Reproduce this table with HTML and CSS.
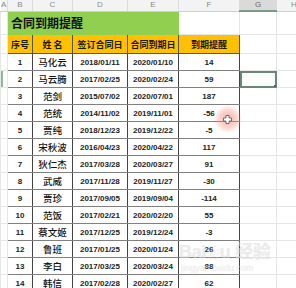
FILE: index.html
```html
<!DOCTYPE html>
<html>
<head>
<meta charset="utf-8">
<link rel="stylesheet" href="styles.css">
</head>
<body>
<div class="sheet">
<table class="grid">
<colgroup>
<col class="ca"><col class="cb"><col class="cc"><col class="cd"><col class="ce"><col class="cf"><col class="cg"><col class="ch">
</colgroup>
<tr class="colhead">
<td>A</td><td>B</td><td>C</td><td>D</td><td>E</td><td>F</td><td class="sel">G</td><td class="lastcol">H</td>
</tr>
<tr class="titlerow">
<td class="blank"></td><td class="title" colspan="4">合同到期提醒</td><td class="blank"></td><td class="blank"></td><td class="blank"></td>
</tr>
<tr class="headrow">
<td class="blank"></td><td class="hd">序号</td><td class="hd">姓 名</td><td class="hd">签订合同日</td><td class="hd">合同到期日</td><td class="hd">到期提醒</td><td class="blank"></td><td class="blank"></td>
</tr>
<tr class="row"><td class="blank"></td><td class="n">1</td><td class="nm">马化云</td><td class="n">2018/01/11</td><td class="n">2020/01/10</td><td class="n">14</td><td class="blank"></td><td class="blank"></td></tr>
<tr class="row"><td class="blank mark"></td><td class="n">2</td><td class="nm">马云腾</td><td class="n">2017/02/25</td><td class="n">2020/02/24</td><td class="n">59</td><td class="blank active"><span class="handle"></span></td><td class="blank"></td></tr>
<tr class="row"><td class="blank"></td><td class="n">3</td><td class="nm">范剑</td><td class="n">2015/07/02</td><td class="n">2020/07/01</td><td class="n">187</td><td class="blank"></td><td class="blank"></td></tr>
<tr class="row"><td class="blank"></td><td class="n">4</td><td class="nm">范统</td><td class="n">2014/11/02</td><td class="n">2019/11/01</td><td class="n">-56</td><td class="blank"></td><td class="blank"></td></tr>
<tr class="row"><td class="blank"></td><td class="n">5</td><td class="nm">贾纯</td><td class="n">2018/12/23</td><td class="n">2019/12/22</td><td class="n">-5</td><td class="blank"></td><td class="blank"></td></tr>
<tr class="row"><td class="blank"></td><td class="n">6</td><td class="nm">宋秋波</td><td class="n">2016/04/23</td><td class="n">2020/04/22</td><td class="n">117</td><td class="blank"></td><td class="blank"></td></tr>
<tr class="row"><td class="blank"></td><td class="n">7</td><td class="nm">狄仁杰</td><td class="n">2017/03/28</td><td class="n">2020/03/27</td><td class="n">91</td><td class="blank"></td><td class="blank"></td></tr>
<tr class="row"><td class="blank"></td><td class="n">8</td><td class="nm">武威</td><td class="n">2017/11/28</td><td class="n">2019/11/27</td><td class="n">-30</td><td class="blank"></td><td class="blank"></td></tr>
<tr class="row"><td class="blank"></td><td class="n">9</td><td class="nm">贾珍</td><td class="n">2017/09/05</td><td class="n">2019/09/04</td><td class="n">-114</td><td class="blank"></td><td class="blank"></td></tr>
<tr class="row"><td class="blank"></td><td class="n">10</td><td class="nm">范饭</td><td class="n">2017/02/21</td><td class="n">2020/02/20</td><td class="n">55</td><td class="blank"></td><td class="blank"></td></tr>
<tr class="row"><td class="blank"></td><td class="n">11</td><td class="nm">蔡文姬</td><td class="n">2017/12/25</td><td class="n">2019/12/24</td><td class="n">-3</td><td class="blank"></td><td class="blank"></td></tr>
<tr class="row"><td class="blank"></td><td class="n">12</td><td class="nm">鲁班</td><td class="n">2017/01/25</td><td class="n">2020/01/24</td><td class="n">26</td><td class="blank"></td><td class="blank"></td></tr>
<tr class="row"><td class="blank"></td><td class="n">13</td><td class="nm">李白</td><td class="n">2017/03/25</td><td class="n">2020/03/24</td><td class="n">88</td><td class="blank"></td><td class="blank"></td></tr>
<tr class="row"><td class="blank"></td><td class="n">14</td><td class="nm">韩信</td><td class="n">2017/02/28</td><td class="n">2020/02/27</td><td class="n">62</td><td class="blank"></td><td class="blank"></td></tr>
</table>
<div class="cursor"><div class="glow"></div><svg class="cross" width="9" height="9" viewBox="0 0 9 9"><path d="M3 0.5h3v2.5h2.5v3h-2.5v2.5h-3v-2.5h-2.5v-3h2.5z" fill="#fff" stroke="#555" stroke-width="0.8"/></svg></div>
<div class="watermark"><div class="wm1">Bai<span class="paw">❀</span>u 经验</div><div class="wm2">jingyan.baidu.com</div></div>
</div>
</body>
</html>
```
FILE: styles.css
```css
html, body {
  margin: 0;
  padding: 0;
  background: #fff;
}
.sheet {
  position: relative;
  width: 296px;
  height: 288px;
  overflow: hidden;
}
.grid {
  border-collapse: collapse;
  table-layout: fixed;
  width: 316px;
  font-family: "Liberation Sans", "Noto Sans CJK SC", sans-serif;
  color: #222;
}
.ca { width: 7px; }
.cb { width: 25px; }
.cc { width: 40px; }
.cd { width: 55px; }
.ce { width: 51px; }
.cf { width: 61px; }
.cg { width: 37px; }
.ch { width: 40px; }
td {
  padding: 0;
  overflow: hidden;
  white-space: nowrap;
  text-align: center;
}
.colhead td {
  height: 10px;
  background: #f3f3f3;
  color: #8a8a8a;
  font-size: 8px;
  line-height: 10px;
  border-right: 1px solid #dcdcdc;
  border-bottom: 1px solid #cfcfcf;
}
.colhead td.lastcol {
  text-align: left;
  padding-left: 14px;
}
.colhead td.sel {
  background: #dadada;
  color: #666;
  border-bottom: 2px solid #7d9a88;
}
.blank {
  border: 1px solid #e6e6e6;
}
.titlerow td {
  height: 22px;
}
.title {
  background: #90cf50;
  text-align: left;
  padding-left: 3px;
  font-family: "Noto Sans CJK SC", sans-serif;
  font-weight: 700;
  font-size: 12px;
  color: #111;
  border: 1px solid #90cf50;
  border-left: 1px solid #555;
}
.headrow td {
  height: 18px;
}
.hd {
  background: #ffc000;
  font-family: "Noto Sans CJK SC", sans-serif;
  font-weight: 700;
  font-size: 9px;
  color: #1a1a1a;
  border: 1px solid #555;
}
.row td {
  height: 16px;
}
.n, .nm {
  border-left: 1px solid #444;
  border-right: 1px solid #444;
  border-top: 1px solid #808080;
  border-bottom: 1px solid #808080;
}
.n {
  font-size: 8px;
  font-weight: 700;
  color: #222;
}
.nm {
  font-family: "Noto Sans CJK SC", sans-serif;
  font-size: 9.5px;
  font-weight: 500;
  color: #111;
}
.mark {
  box-shadow: inset 2px 0 0 #8fb79c;
}
.active {
  position: relative;
  outline: 2px solid #6b8576;
  outline-offset: -2px;
  background: #fbfdfc;
}
.handle {
  position: absolute;
  right: -1px;
  bottom: -1px;
  width: 3px;
  height: 3px;
  background: #4f6b5c;
}
.cursor {
  position: absolute;
  left: 214px;
  top: 105px;
  width: 28px;
  height: 28px;
}
.glow {
  position: absolute;
  inset: 0;
  border-radius: 50%;
  background: radial-gradient(circle, rgba(240,110,90,0.55) 0%, rgba(245,140,120,0.35) 45%, rgba(255,200,190,0) 72%);
}
.cross {
  position: absolute;
  left: 9px;
  top: 10px;
}
.watermark {
  position: absolute;
  left: 179px;
  top: 242px;
  color: rgba(255,255,255,0.4);
  text-shadow: 0 0 1px rgba(140,140,140,0.3);
  font-family: "Liberation Sans", "Noto Sans CJK SC", sans-serif;
}
.wm1 {
  font-size: 18px;
  font-weight: 700;
  line-height: 20px;
  letter-spacing: -0.3px;
}
.paw {
  font-size: 14px;
}
.wm2 {
  font-size: 9px;
  line-height: 11px;
  padding-left: 2px;
}
```
